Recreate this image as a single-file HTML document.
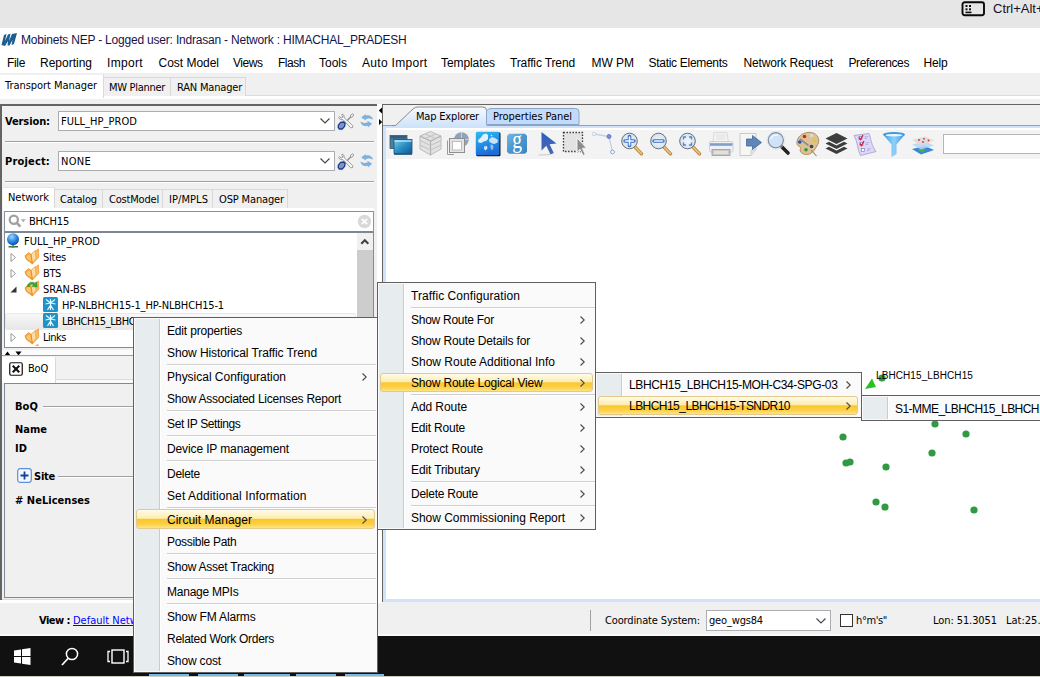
<!DOCTYPE html>
<html><head><meta charset="utf-8"><title>Mobinets NEP</title>
<style>
html,body{margin:0;padding:0;}
body{width:1040px;height:677px;overflow:hidden;position:relative;background:#f0f0f0;font-family:"Liberation Sans",sans-serif;color:#000;}
body div,body span.t,body svg{position:absolute;box-sizing:border-box;}
span.t{white-space:nowrap;}
.tah{font-family:"DejaVu Sans Condensed","DejaVu Sans","Liberation Sans",sans-serif;font-stretch:condensed;}
</style></head><body>
<div style="left:0px;top:0px;width:1040px;height:28px;background:#e6e6e6"></div>
<div style="left:0px;top:28px;width:1040px;height:45px;background:#fff"></div>
<div style="left:0px;top:73px;width:1040px;height:604px;background:#f0f0f0"></div>
<svg style="left:961px;top:0.8px" width="26" height="16" viewBox="0 0 26 16"><rect x="1.5" y="1.2" width="21.5" height="13" rx="2.2" fill="none" stroke="#0a0a0a" stroke-width="1.9"/><rect x="4.5" y="4" width="2" height="2" fill="#111"/><rect x="8" y="4" width="2" height="2" fill="#111"/><rect x="4.5" y="7.3" width="2" height="2" fill="#111"/><rect x="8" y="7.3" width="2" height="2" fill="#111"/><rect x="4.5" y="10.6" width="6" height="1.6" fill="#111"/></svg>
<span class="t" style="left:993px;top:0.5px;height:16px;line-height:16px;font-size:13px;color:#101030;">Ctrl+Alt+Del</span>
<svg style="left:0px;top:32px" width="19" height="16" viewBox="0 0 19 16"><path d="M1.5 13 L4 3 L6.5 2 L5 9 L8 2.5 L10.5 1.8 L9 9 L12 2 L17 1 L14 12 L11.5 13 L12.5 8 L9.5 13.5 L7.5 13.5 L8 9 L5 14 Z" fill="#1d5f8f"/></svg>
<span class="t" style="left:21px;top:32.0px;height:16px;line-height:16px;font-size:12px;letter-spacing:-0.202px;color:#14144a;">Mobinets NEP - Logged user: Indrasan - Network : HIMACHAL_PRADESH</span>
<span class="t" style="left:7px;top:55.0px;height:16px;line-height:16px;font-size:12px;letter-spacing:-0.336px;">File</span>
<span class="t" style="left:40px;top:55.0px;height:16px;line-height:16px;font-size:12px;letter-spacing:-0.003px;">Reporting</span>
<span class="t" style="left:107px;top:55.0px;height:16px;line-height:16px;font-size:12px;letter-spacing:0.331px;">Import</span>
<span class="t" style="left:158.5px;top:55.0px;height:16px;line-height:16px;font-size:12px;letter-spacing:-0.020px;">Cost Model</span>
<span class="t" style="left:233px;top:55.0px;height:16px;line-height:16px;font-size:12px;letter-spacing:-0.459px;">Views</span>
<span class="t" style="left:278px;top:55.0px;height:16px;line-height:16px;font-size:12px;letter-spacing:-0.469px;">Flash</span>
<span class="t" style="left:319px;top:55.0px;height:16px;line-height:16px;font-size:12px;letter-spacing:-0.003px;">Tools</span>
<span class="t" style="left:362px;top:55.0px;height:16px;line-height:16px;font-size:12px;letter-spacing:0.315px;">Auto Import</span>
<span class="t" style="left:441px;top:55.0px;height:16px;line-height:16px;font-size:12px;letter-spacing:-0.078px;">Templates</span>
<span class="t" style="left:510px;top:55.0px;height:16px;line-height:16px;font-size:12px;letter-spacing:-0.131px;">Traffic Trend</span>
<span class="t" style="left:591.5px;top:55.0px;height:16px;line-height:16px;font-size:12px;letter-spacing:-0.031px;">MW PM</span>
<span class="t" style="left:648.5px;top:55.0px;height:16px;line-height:16px;font-size:12px;letter-spacing:-0.292px;">Static Elements</span>
<span class="t" style="left:743.5px;top:55.0px;height:16px;line-height:16px;font-size:12px;letter-spacing:-0.170px;">Network Request</span>
<span class="t" style="left:848.5px;top:55.0px;height:16px;line-height:16px;font-size:12px;letter-spacing:-0.382px;">Preferences</span>
<span class="t" style="left:923.5px;top:55.0px;height:16px;line-height:16px;font-size:12px;letter-spacing:-0.172px;">Help</span>
<div style="left:0px;top:95px;width:1040px;height:1px;background:#dcdcdc;"></div>
<div style="left:0px;top:96px;width:1040px;height:3px;background:#fff;"></div>
<div style="left:0px;top:75px;width:104px;height:23px;background:#fff;border-right:1px solid #d9d9d9;"></div>
<div style="left:104px;top:77px;width:67px;height:19px;background:#f0f0f0;border:1px solid #d9d9d9;border-bottom:none;border-left:none;"></div>
<div style="left:171px;top:77px;width:75px;height:19px;background:#f0f0f0;border:1px solid #d9d9d9;border-bottom:none;border-left:none;"></div>
<span class="t tah" style="left:5px;top:78.0px;height:16px;line-height:16px;font-size:11px;letter-spacing:-0.047px;">Transport Manager</span>
<span class="t tah" style="left:109px;top:80.0px;height:16px;line-height:16px;font-size:11px;letter-spacing:-0.295px;">MW Planner</span>
<span class="t tah" style="left:177px;top:80.0px;height:16px;line-height:16px;font-size:11px;letter-spacing:-0.193px;">RAN Manager</span>
<div style="left:0px;top:104px;width:378px;height:2px;background:#646464;"></div>
<div style="left:0px;top:104px;width:2px;height:498px;background:#646464;"></div>
<div style="left:2px;top:599px;width:376px;height:1px;background:#dcdcdc;"></div>
<div style="left:0px;top:600px;width:382px;height:3px;background:#fff;"></div>
<div style="left:377px;top:104px;width:5px;height:498px;background:#fff;"></div>
<svg style="left:377px;top:106px" width="6" height="20" viewBox="0 0 6 20"><path d="M5 1.5 L5 7.5 L1.8 4.5 Z" fill="#000"/><path d="M2 13 L2 19 L5.2 16 Z" fill="#000"/></svg>
<span class="t tah" style="left:5px;top:114.0px;height:16px;line-height:16px;font-size:11px;font-weight:bold;letter-spacing:-0.094px;">Version:</span>
<div style="left:58px;top:111px;width:277px;height:20px;background:#fff;border:1px solid #abadb3;"></div>
<span class="t tah" style="left:61px;top:114.0px;height:16px;line-height:16px;font-size:11px;letter-spacing:0.039px;">FULL_HP_PROD</span>
<svg style="left:319px;top:117px" width="12" height="8" viewBox="0 0 12 8"><path d="M1.5 1.5 L6 6 L10.5 1.5" fill="none" stroke="#444" stroke-width="1.1"/></svg>
<svg style="left:337px;top:112px" width="18" height="18" viewBox="0 0 18 18"><path d="M15.2 3.2 L7.5 11.5" stroke="#8c8c8c" stroke-width="1.3"/><ellipse cx="15" cy="3.6" rx="1.9" ry="1.2" transform="rotate(-45 15 3.6)" fill="#fafafa" stroke="#8c8c8c" stroke-width="0.9"/><path d="M5.2 2.2 L6.8 3.2 L7.2 5.8 L15.8 13.8 L15.6 15.6 L13.8 15.8 L6.2 7.8 L3.4 7.6 L1.6 5.4 L2.4 4.6 L4 6 L5.4 5.6 L5.6 4 L4.4 3 Z" fill="#fcfcfc" stroke="#8c8c8c" stroke-width="0.9" stroke-linejoin="round"/><path d="M1.4 13.2 L3.6 10.4 L6.8 10 L8 11.6 L7.6 14.4 L5.2 17 L2.2 17 L1.2 15.4 Z" fill="#7f95bd" stroke="#173c92" stroke-width="1.3" stroke-linejoin="round"/></svg>
<svg style="left:359px;top:113px" width="16" height="16" viewBox="0 0 16 16"><path d="M2.2 4.6 L6.5 1 L6.5 2.6 C10 1.5 13.5 3 14 6.8 C12 5.3 9.5 5.2 6.8 6 L7 7.6 Z" fill="#7fb0dc"/><path d="M13.2 10.8 L8.9 14.4 L8.9 12.8 C5.4 13.9 1.9 12.4 1.4 8.6 C3.4 10.1 5.9 10.2 8.6 9.4 L8.4 7.8 Z" fill="#7fb0dc"/></svg>
<span class="t tah" style="left:5px;top:154.0px;height:16px;line-height:16px;font-size:11px;font-weight:bold;letter-spacing:0.176px;">Project:</span>
<div style="left:58px;top:151px;width:277px;height:20px;background:#fff;border:1px solid #abadb3;"></div>
<span class="t tah" style="left:61px;top:154.0px;height:16px;line-height:16px;font-size:11px;letter-spacing:0.289px;">NONE</span>
<svg style="left:319px;top:157px" width="12" height="8" viewBox="0 0 12 8"><path d="M1.5 1.5 L6 6 L10.5 1.5" fill="none" stroke="#444" stroke-width="1.1"/></svg>
<svg style="left:337px;top:152px" width="18" height="18" viewBox="0 0 18 18"><path d="M15.2 3.2 L7.5 11.5" stroke="#8c8c8c" stroke-width="1.3"/><ellipse cx="15" cy="3.6" rx="1.9" ry="1.2" transform="rotate(-45 15 3.6)" fill="#fafafa" stroke="#8c8c8c" stroke-width="0.9"/><path d="M5.2 2.2 L6.8 3.2 L7.2 5.8 L15.8 13.8 L15.6 15.6 L13.8 15.8 L6.2 7.8 L3.4 7.6 L1.6 5.4 L2.4 4.6 L4 6 L5.4 5.6 L5.6 4 L4.4 3 Z" fill="#fcfcfc" stroke="#8c8c8c" stroke-width="0.9" stroke-linejoin="round"/><path d="M1.4 13.2 L3.6 10.4 L6.8 10 L8 11.6 L7.6 14.4 L5.2 17 L2.2 17 L1.2 15.4 Z" fill="#7f95bd" stroke="#173c92" stroke-width="1.3" stroke-linejoin="round"/></svg>
<svg style="left:359px;top:153px" width="16" height="16" viewBox="0 0 16 16"><path d="M2.2 4.6 L6.5 1 L6.5 2.6 C10 1.5 13.5 3 14 6.8 C12 5.3 9.5 5.2 6.8 6 L7 7.6 Z" fill="#7fb0dc"/><path d="M13.2 10.8 L8.9 14.4 L8.9 12.8 C5.4 13.9 1.9 12.4 1.4 8.6 C3.4 10.1 5.9 10.2 8.6 9.4 L8.4 7.8 Z" fill="#7fb0dc"/></svg>
<div style="left:5px;top:141px;width:369px;height:1px;background:#a0a0a0;"></div>
<div style="left:5px;top:142px;width:369px;height:1px;background:#fff;"></div>
<div style="left:5px;top:181px;width:369px;height:1px;background:#a0a0a0;"></div>
<div style="left:5px;top:182px;width:369px;height:1px;background:#fff;"></div>
<div style="left:3px;top:187px;width:52px;height:22px;background:#fff;border-right:1px solid #d9d9d9;border-top:1px solid #e5e5e5;"></div>
<div style="left:55px;top:189px;width:48px;height:19px;background:#f0f0f0;border:1px solid #d9d9d9;border-bottom:none;border-left:none;"></div>
<span class="t tah" style="left:60px;top:192.0px;height:16px;line-height:16px;font-size:11px;letter-spacing:-0.145px;">Catalog</span>
<div style="left:103px;top:189px;width:60px;height:19px;background:#f0f0f0;border:1px solid #d9d9d9;border-bottom:none;border-left:none;"></div>
<span class="t tah" style="left:109px;top:192.0px;height:16px;line-height:16px;font-size:11px;letter-spacing:-0.191px;">CostModel</span>
<div style="left:163px;top:189px;width:50px;height:19px;background:#f0f0f0;border:1px solid #d9d9d9;border-bottom:none;border-left:none;"></div>
<span class="t tah" style="left:169px;top:192.0px;height:16px;line-height:16px;font-size:11px;letter-spacing:0.067px;">IP/MPLS</span>
<div style="left:213px;top:189px;width:75px;height:19px;background:#f0f0f0;border:1px solid #d9d9d9;border-bottom:none;border-left:none;"></div>
<span class="t tah" style="left:219px;top:192.0px;height:16px;line-height:16px;font-size:11px;letter-spacing:-0.143px;">OSP Manager</span>
<span class="t tah" style="left:8px;top:190.0px;height:16px;line-height:16px;font-size:11px;letter-spacing:-0.047px;">Network</span>
<div style="left:3px;top:208px;width:371px;height:3px;background:#fff;"></div>
<div style="left:4px;top:211px;width:370px;height:22px;background:#fff;border:1px solid #8a94a0;border-bottom:2px solid #7d8793;"></div>
<svg style="left:8px;top:214px" width="20" height="14" viewBox="0 0 20 14"><circle cx="5.8" cy="5.8" r="4.1" fill="none" stroke="#a0a0a0" stroke-width="2.2"/><path d="M8.8 8.8 L12.3 12.6" stroke="#a0a0a0" stroke-width="2.6"/><path d="M12.8 5.3 L17.8 5.3 L15.3 8.2 Z" fill="#ababab"/></svg>
<span class="t tah" style="left:29px;top:214.0px;height:16px;line-height:16px;font-size:11px;letter-spacing:-0.198px;">BHCH15</span>
<svg style="left:356.5px;top:213.5px" width="15" height="15" viewBox="0 0 15 15"><circle cx="7.5" cy="7.5" r="6.7" fill="#d9d9d9"/><path d="M4.8 4.8 L10.2 10.2 M10.2 4.8 L4.8 10.2" stroke="#fff" stroke-width="1.8"/></svg>
<div style="left:4px;top:233px;width:370px;height:115px;background:#fff;border:1px solid #828c99;border-top:none;"></div>
<div style="left:357px;top:233px;width:16px;height:114px;background:#f0f0f0;"></div>
<div style="left:357px;top:250px;width:16px;height:97px;background:#cdcdcd;"></div>
<svg style="left:359px;top:237px" width="12" height="8" viewBox="0 0 12 8"><path d="M2.3 6.8 L5.8 3.3 L9.3 6.8" fill="none" stroke="#404040" stroke-width="2.1"/></svg>
<div style="left:5px;top:313px;width:351px;height:17px;background:linear-gradient(#f8f8f8,#e7e7e7);border:1px solid #e2e9f1;border-radius:2px;"></div>
<svg style="left:6px;top:233px" width="15" height="16" viewBox="0 0 15 16"><defs><radialGradient id="gl" cx="0.4" cy="0.3" r="0.7"><stop offset="0" stop-color="#9fd4ff"/><stop offset="0.6" stop-color="#2a86e0"/><stop offset="1" stop-color="#0c4fa8"/></radialGradient></defs><circle cx="7" cy="6.3" r="6" fill="url(#gl)"/><path d="M2.5 13.8 L12 13.8" stroke="#333" stroke-width="1.2"/><circle cx="7" cy="13.6" r="1.5" fill="#2fa52f"/></svg>
<span class="t tah" style="left:24px;top:234.0px;height:16px;line-height:16px;font-size:11px;letter-spacing:0.039px;">FULL_HP_PROD</span>
<svg style="left:9px;top:252px" width="9" height="11" viewBox="0 0 9 11"><path d="M2 1.5 L6.5 5.5 L2 9.5 Z" fill="#fff" stroke="#989898" stroke-width="1"/></svg>
<svg style="left:24px;top:248px" width="16" height="17" viewBox="0 0 16 17"><path d="M8.2 6.2 L14.4 0.9 L14.8 9.2 L8.6 15.8 Z" fill="#fbbd62" stroke="#f09a30" stroke-width="0.8" stroke-linejoin="round"/><path d="M6.6 6.8 L11.4 2.4 L12 10.4 L8.2 15.6 Z" fill="#ffdcaa" stroke="#f2a23a" stroke-width="0.8" stroke-linejoin="round"/><path d="M1 7.8 L4.8 4.8 L7.2 6.6 L8.4 15.8 L2.6 11.6 Z" fill="#f8ab42" stroke="#ec8a1a" stroke-width="0.9" stroke-linejoin="round"/><path d="M2.4 8.4 L4.8 6.4 L6.2 7.6 L7 13.4 L3.4 10.8 Z" fill="#fcc778"/></svg>
<span class="t tah" style="left:43px;top:250.0px;height:16px;line-height:16px;font-size:11px;letter-spacing:-0.234px;">Sites</span>
<svg style="left:9px;top:268px" width="9" height="11" viewBox="0 0 9 11"><path d="M2 1.5 L6.5 5.5 L2 9.5 Z" fill="#fff" stroke="#989898" stroke-width="1"/></svg>
<svg style="left:24px;top:264px" width="16" height="17" viewBox="0 0 16 17"><path d="M8.2 6.2 L14.4 0.9 L14.8 9.2 L8.6 15.8 Z" fill="#fbbd62" stroke="#f09a30" stroke-width="0.8" stroke-linejoin="round"/><path d="M6.6 6.8 L11.4 2.4 L12 10.4 L8.2 15.6 Z" fill="#ffdcaa" stroke="#f2a23a" stroke-width="0.8" stroke-linejoin="round"/><path d="M1 7.8 L4.8 4.8 L7.2 6.6 L8.4 15.8 L2.6 11.6 Z" fill="#f8ab42" stroke="#ec8a1a" stroke-width="0.9" stroke-linejoin="round"/><path d="M2.4 8.4 L4.8 6.4 L6.2 7.6 L7 13.4 L3.4 10.8 Z" fill="#fcc778"/></svg>
<span class="t tah" style="left:43px;top:266.0px;height:16px;line-height:16px;font-size:11px;letter-spacing:-0.375px;">BTS</span>
<svg style="left:9px;top:285px" width="9" height="9" viewBox="0 0 9 9"><path d="M7.5 1.5 L7.5 7.5 L1.5 7.5 Z" fill="#333"/></svg>
<svg style="left:24px;top:280px" width="16" height="17" viewBox="0 0 16 17"><path d="M8.2 6.2 L14.4 0.9 L14.8 9.2 L8.6 15.8 Z" fill="#fbbd62" stroke="#f09a30" stroke-width="0.8" stroke-linejoin="round"/><path d="M6.6 6.8 L11.4 2.4 L12 10.4 L8.2 15.6 Z" fill="#ffdcaa" stroke="#f2a23a" stroke-width="0.8" stroke-linejoin="round"/><path d="M1 7.8 L4.8 4.8 L7.2 6.6 L8.4 15.8 L2.6 11.6 Z" fill="#f8ab42" stroke="#ec8a1a" stroke-width="0.9" stroke-linejoin="round"/><path d="M2.4 8.4 L4.8 6.4 L6.2 7.6 L7 13.4 L3.4 10.8 Z" fill="#fcc778"/><path d="M3.2 6.4 C3.8 2.4 8.4 0.8 11 3.4 L12.6 1.8 L13.2 7 L8 6.6 L9.6 4.9 C8.2 3.8 6 4.2 5.4 6.8 Z" fill="#35aa2c" stroke="#23861e" stroke-width="0.5"/></svg>
<span class="t tah" style="left:43px;top:282.0px;height:16px;line-height:16px;font-size:11px;letter-spacing:0.007px;">SRAN-BS</span>
<svg style="left:9px;top:332px" width="9" height="11" viewBox="0 0 9 11"><path d="M2 1.5 L6.5 5.5 L2 9.5 Z" fill="#fff" stroke="#989898" stroke-width="1"/></svg>
<svg style="left:24px;top:328px" width="16" height="17" viewBox="0 0 16 17"><path d="M8.2 6.2 L14.4 0.9 L14.8 9.2 L8.6 15.8 Z" fill="#fbbd62" stroke="#f09a30" stroke-width="0.8" stroke-linejoin="round"/><path d="M6.6 6.8 L11.4 2.4 L12 10.4 L8.2 15.6 Z" fill="#ffdcaa" stroke="#f2a23a" stroke-width="0.8" stroke-linejoin="round"/><path d="M1 7.8 L4.8 4.8 L7.2 6.6 L8.4 15.8 L2.6 11.6 Z" fill="#f8ab42" stroke="#ec8a1a" stroke-width="0.9" stroke-linejoin="round"/><path d="M2.4 8.4 L4.8 6.4 L6.2 7.6 L7 13.4 L3.4 10.8 Z" fill="#fcc778"/></svg>
<span class="t tah" style="left:43px;top:330.0px;height:16px;line-height:16px;font-size:11px;letter-spacing:-0.484px;">Links</span>
<svg style="left:43px;top:297px" width="15" height="15" viewBox="0 0 15 15"><rect width="15" height="15" rx="1.5" fill="#1e93c8"/><path d="M7.5 2 L7.5 13 M7.5 6 L3 2.5 M7.5 6 L12 2.5 M7.5 6 L2.5 7 M7.5 6 L12.5 7 M7.5 8 L4.5 13 M7.5 8 L10.5 13" stroke="#e8f6ff" stroke-width="1.2" fill="none"/></svg>
<span class="t tah" style="left:62px;top:298.0px;height:16px;line-height:16px;font-size:11px;letter-spacing:-0.161px;">HP-NLBHCH15-1_HP-NLBHCH15-1</span>
<svg style="left:43px;top:313px" width="15" height="15" viewBox="0 0 15 15"><rect width="15" height="15" rx="1.5" fill="#1e93c8"/><path d="M7.5 2 L7.5 13 M7.5 6 L3 2.5 M7.5 6 L12 2.5 M7.5 6 L2.5 7 M7.5 6 L12.5 7 M7.5 8 L4.5 13 M7.5 8 L10.5 13" stroke="#e8f6ff" stroke-width="1.2" fill="none"/></svg>
<span class="t tah" style="left:62px;top:314.0px;height:16px;line-height:16px;font-size:11px;letter-spacing:-0.423px;">LBHCH15_LBHCH15</span>
<svg style="left:26px;top:343px" width="14" height="3" viewBox="0 0 14 3"><path d="M9 3 L12 0.5 L13 3 Z" fill="#f7b04a"/></svg>
<div style="left:2px;top:350px;width:375px;height:5px;background:#fbfbfb;"></div>
<svg style="left:4px;top:350px" width="20" height="6" viewBox="0 0 20 6"><path d="M0.5 5.5 L3.5 1.5 L6.5 5.5 Z" fill="#000"/><path d="M11.5 1.5 L17.5 1.5 L14.5 5.5 Z" fill="#000"/></svg>
<div style="left:2px;top:355px;width:376px;height:1px;background:#a0a0a0;"></div>
<div style="left:2px;top:356px;width:375px;height:24px;background:#f1f1f1;"></div>
<div style="left:2px;top:379px;width:375px;height:1px;background:#dcdcdc;"></div>
<div style="left:2px;top:380px;width:375px;height:3px;background:#fbfbfb;"></div>
<div style="left:2px;top:357px;width:54px;height:26px;background:#fff;border-right:1px solid #d9d9d9;"></div>
<svg style="left:9px;top:362px" width="14" height="14" viewBox="0 0 15 15"><rect x="0.8" y="0.8" width="13.4" height="13.4" rx="1.5" fill="#fff" stroke="#111" stroke-width="1.3"/><path d="M4 4 L11 11 M11 4 L4 11" stroke="#111" stroke-width="2.2"/></svg>
<span class="t tah" style="left:28px;top:361.0px;height:16px;line-height:16px;font-size:11px;letter-spacing:-0.214px;">BoQ</span>
<div style="left:4px;top:383px;width:372px;height:215px;background:#f0f0f0;border:1px solid #7f8a96;"></div>
<span class="t tah" style="left:15px;top:399.0px;height:16px;line-height:16px;font-size:11px;font-weight:bold;letter-spacing:0.078px;">BoQ</span>
<div style="left:43px;top:406px;width:331px;height:1px;background:#a0a0a0;"></div>
<div style="left:43px;top:407px;width:331px;height:1px;background:#fff;"></div>
<span class="t tah" style="left:15px;top:422.0px;height:16px;line-height:16px;font-size:11px;font-weight:bold;">Name</span>
<span class="t tah" style="left:15px;top:441.0px;height:16px;line-height:16px;font-size:11px;font-weight:bold;letter-spacing:0.047px;">ID</span>
<svg style="left:17px;top:468px" width="15" height="15" viewBox="0 0 15 15"><rect x="0.7" y="0.7" width="13.6" height="13.6" rx="2.5" fill="#f4f8ff" stroke="#5d8fd6" stroke-width="1.2"/><path d="M7.5 3.5 L7.5 11.5 M3.5 7.5 L11.5 7.5" stroke="#1b3f9a" stroke-width="1.8"/></svg>
<span class="t tah" style="left:34px;top:469.0px;height:16px;line-height:16px;font-size:11px;font-weight:bold;letter-spacing:-0.242px;">Site</span>
<div style="left:58px;top:476px;width:316px;height:1px;background:#a0a0a0;"></div>
<div style="left:58px;top:477px;width:316px;height:1px;background:#fff;"></div>
<span class="t tah" style="left:15px;top:493.0px;height:16px;line-height:16px;font-size:11px;font-weight:bold;letter-spacing:0.036px;"># NeLicenses</span>
<span class="t tah" style="left:39px;top:613.0px;height:16px;line-height:16px;font-size:11px;font-weight:bold;letter-spacing:-0.521px;">View :</span>
<span class="t tah" style="left:73px;top:613.0px;height:16px;line-height:16px;font-size:11px;color:#0000ff;text-decoration:underline;">Default Network View</span>
<div style="left:382px;top:104px;width:658px;height:1px;background:#646464;"></div>
<div style="left:382px;top:104px;width:1px;height:498px;background:#646464;"></div>
<div style="left:383px;top:126px;width:660px;height:476px;background:#fff;border:3px solid #cfe3fa;border-top-width:2px;"></div>
<div style="left:383px;top:125px;width:657px;height:1px;background:#a0a0a0;"></div>
<svg style="left:392px;top:105px" width="190" height="24" viewBox="0 0 190 24"><defs><linearGradient id="tg" x1="0" y1="0" x2="0" y2="1"><stop offset="0" stop-color="#f6f9fe"/><stop offset="1" stop-color="#cfe3fa"/></linearGradient></defs><path d="M0 21.5 L3.5 20.5 L21 4 Q23 2 26 2 L91 2 Q94.5 2 94.5 5.5 L94.5 21.5 Z" fill="url(#tg)"/><path d="M0 20.5 L3.5 20.5 L21 4 Q23 2 26 2 L91 2 Q94.5 2 94.5 5.5 L94.5 19" fill="none" stroke="#8a8a8a" stroke-width="1"/><path d="M94.5 6 Q96 3.5 99 3.5 L183.5 3.5 Q187 3.5 187 7 L187 19.5 L94.5 19.5 Z" fill="#c3dbfa" stroke="#8aa5c8" stroke-width="1"/></svg>
<span class="t tah" style="left:416px;top:109.0px;height:16px;line-height:16px;font-size:11px;letter-spacing:-0.185px;">Map Explorer</span>
<span class="t tah" style="left:493px;top:109.0px;height:16px;line-height:16px;font-size:11px;letter-spacing:-0.048px;">Properties Panel</span>
<div style="left:386px;top:130px;width:654px;height:29px;background:#f3f3f3;"></div>
<svg style="left:0;top:0" width="0" height="0"><defs><linearGradient id="wb" x1="0" y1="0" x2="1" y2="1"><stop offset="0" stop-color="#7fd0ee"/><stop offset="0.5" stop-color="#2a8ec4"/><stop offset="1" stop-color="#125a94"/></linearGradient><linearGradient id="wm" x1="0" y1="0" x2="0" y2="1"><stop offset="0" stop-color="#57b4f0"/><stop offset="1" stop-color="#1a6fd0"/></linearGradient><linearGradient id="ar" x1="0" y1="0" x2="0" y2="1"><stop offset="0" stop-color="#2b5fc0"/><stop offset="1" stop-color="#4a68b0"/></linearGradient><radialGradient id="lens" cx="0.5" cy="0.5" r="0.6"><stop offset="0" stop-color="#f4f8fd"/><stop offset="1" stop-color="#c9dcf0"/></radialGradient><linearGradient id="fn" x1="0" y1="0" x2="1" y2="0"><stop offset="0" stop-color="#3aa0e6"/><stop offset="0.5" stop-color="#8fd0fa"/><stop offset="1" stop-color="#3a98e0"/></linearGradient></defs></svg>
<svg style="left:389px;top:134px" width="24" height="22" viewBox="0 0 24 22"><rect x="1" y="1.5" width="17" height="13" fill="#4d7f9d" stroke="#2d5a78" stroke-width="0.8"/><rect x="1.5" y="2" width="16" height="2.5" fill="#2f5f80"/><rect x="5" y="5.5" width="18" height="14" fill="url(#wb)" stroke="#1d4f78" stroke-width="0.8"/><rect x="5.5" y="6" width="17" height="2" fill="#cfeefa" opacity="0.6"/><rect x="5" y="19.5" width="18" height="1.3" fill="#1b4a70"/></svg>
<svg style="left:418px;top:130px" width="25" height="27" viewBox="0 0 25 27"><path d="M2 6 L12.5 1.5 L23 6 L23 19 L12.5 25 L2 19 Z" fill="#e2e2e2" stroke="#bcbcbc" stroke-width="1"/><path d="M2 6 L12.5 11 L23 6 M12.5 11 L12.5 25" fill="none" stroke="#b0b0b0" stroke-width="1.2"/><path d="M2 10.5 L12.5 15.5 L23 10.5 M2 15 L12.5 20 L23 15 M7 3.8 L17.5 8.6 M18 3.8 L7.5 8.6" fill="none" stroke="#c4c4c4" stroke-width="1.1"/></svg>
<svg style="left:446px;top:131px" width="24" height="25" viewBox="0 0 24 25"><circle cx="15.5" cy="8.5" r="7.3" fill="#8fa4bc"/><path d="M15.5 1.2 L15.5 15.8 M8.2 8.5 L22.8 8.5" stroke="#c8d4e2" stroke-width="0.9"/><path d="M1.5 9.5 L1.5 23.5 L8 23.5" fill="none" stroke="#9a9a9a" stroke-width="1"/><rect x="3.5" y="7.5" width="15" height="14" fill="#e4e4e4" stroke="#8e8e8e" stroke-width="1"/><rect x="6.5" y="10.5" width="9" height="8.5" fill="#fff" stroke="#b0b0b0" stroke-width="0.8"/></svg>
<svg style="left:475px;top:131px" width="26" height="26" viewBox="0 0 26 26"><defs><linearGradient id="wm2" x1="0" y1="0" x2="0.3" y2="1"><stop offset="0" stop-color="#2cbcf2"/><stop offset="0.5" stop-color="#2494ea"/><stop offset="1" stop-color="#1c6cd6"/></linearGradient><filter id="bl" x="-20%" y="-20%" width="140%" height="140%"><feGaussianBlur stdDeviation="0.7"/></filter></defs><rect x="1.2" y="1.2" width="24.3" height="24" rx="1.5" fill="#10161f"/><rect x="0.8" y="0.8" width="23.6" height="23.4" rx="1.6" fill="url(#wm2)"/><g filter="url(#bl)" fill="#ffffff"><path d="M3 9 L6 6.5 L8 3.5 L11 2.5 L13 4 L13 8 L11 10 L8.5 10.5 L6.5 12 L3.5 11.5 Z" opacity="0.85"/><path d="M14 8.5 L17 6 L20 7 L23 9 L22.5 11.5 L19.5 13 L17 12.5 L14.5 11 Z" opacity="0.75"/><path d="M9 15.5 L12 15 L12.5 17.5 L10.5 19.5 L9 18 Z" opacity="0.8"/><path d="M15.5 13.5 L18 14 L18.5 17 L17 19.5 L15.5 17 Z" opacity="0.5"/><circle cx="16.5" cy="4.6" r="0.8" opacity="0.8"/></g></svg>
<svg style="left:506px;top:133px" width="22" height="21" viewBox="0 0 22 21"><defs><linearGradient id="gg" x1="0" y1="0" x2="1" y2="1"><stop offset="0" stop-color="#78b6e2"/><stop offset="0.5" stop-color="#4a96d0"/><stop offset="1" stop-color="#3a86c2"/></linearGradient></defs><path d="M3 0.8 L19 0.8 L21 2.8 L21 18.8 L19 20.8 L3 20.8 L1 18.8 L1 2.8 Z" fill="url(#gg)"/><text transform="translate(11.2 14.8) scale(0.78 1)" text-anchor="middle" font-family="Liberation Serif, serif" font-size="25" fill="#fff">g</text></svg>
<svg style="left:538px;top:131px" width="20" height="25" viewBox="0 0 20 25"><path d="M3.5 1 L3.5 19.5 L8.3 14.8 L12.5 23.5 L15.8 22 L11.6 13.3 L18.5 12.6 Z" fill="url(#ar)"/><path d="M0.5 24 L12 23.6" stroke="#c9c9c9" stroke-width="1"/></svg>
<svg style="left:562px;top:131px" width="27" height="26" viewBox="0 0 27 26"><rect x="1.5" y="1.5" width="19" height="19" fill="#e3e3e3" stroke="#333" stroke-width="1.3" stroke-dasharray="1.4 1.6"/><path d="M15 7 L15 21 L18 18.3 L21 24.5 L23.3 23.4 L20.3 17.4 L24.5 17 Z" fill="#8c8c8c" stroke="#f8f8f8" stroke-width="0.9"/></svg>
<svg style="left:590px;top:131px" width="27" height="26" viewBox="0 0 27 26"><path d="M4 3 L19 5.5 L22.5 21" fill="none" stroke="#c3cfe6" stroke-width="1.3"/><circle cx="4" cy="3" r="1.8" fill="#f3f3f3" stroke="#cdd3dc" stroke-width="1"/><circle cx="19" cy="5.5" r="2" fill="#7c8ed8" stroke="#6173c6" stroke-width="0.9"/><circle cx="22.5" cy="21" r="1.9" fill="#f4f6fb" stroke="#8ea6d8" stroke-width="1"/></svg>
<svg style="left:620px;top:132px" width="24" height="24" viewBox="0 0 24 24"><path d="M15 15 L21.5 21.8" stroke="#b98a3e" stroke-width="3.4" stroke-linecap="round"/><path d="M15.3 15.3 L21.3 21.5" stroke="#ecc98a" stroke-width="1.5" stroke-linecap="round"/><circle cx="9.5" cy="9" r="7.8" fill="url(#lens)" stroke="#6f6f6f" stroke-width="1"/><path d="M9.5 4.6 L9.5 13.4 M5.1 9 L13.9 9" stroke="#3a6fc2" stroke-width="3.6" stroke-linecap="round"/><path d="M9.5 5 L9.5 13 M5.5 9 L13.5 9" stroke="#f2f7ff" stroke-width="1.6" stroke-linecap="round"/></svg>
<svg style="left:649px;top:132px" width="24" height="24" viewBox="0 0 24 24"><path d="M15 15 L21.5 21.8" stroke="#b98a3e" stroke-width="3.4" stroke-linecap="round"/><path d="M15.3 15.3 L21.3 21.5" stroke="#ecc98a" stroke-width="1.5" stroke-linecap="round"/><circle cx="9.5" cy="9" r="7.8" fill="url(#lens)" stroke="#6f6f6f" stroke-width="1"/><path d="M5.1 9 L13.9 9" stroke="#3a6fc2" stroke-width="3.6" stroke-linecap="round"/><path d="M5.5 9 L13.5 9" stroke="#f2f7ff" stroke-width="1.6" stroke-linecap="round"/></svg>
<svg style="left:678px;top:132px" width="24" height="24" viewBox="0 0 24 24"><path d="M15 15 L21.5 21.8" stroke="#b98a3e" stroke-width="3.4" stroke-linecap="round"/><path d="M15.3 15.3 L21.3 21.5" stroke="#ecc98a" stroke-width="1.5" stroke-linecap="round"/><circle cx="9.5" cy="9" r="7.8" fill="url(#lens)" stroke="#6f6f6f" stroke-width="1"/><path d="M5.5 7.5 L5.5 5 L8 5 M11 5 L13.5 5 L13.5 7.5 M13.5 10.5 L13.5 13 L11 13 M8 13 L5.5 13 L5.5 10.5" fill="none" stroke="#4a86d8" stroke-width="1.3"/></svg>
<svg style="left:708px;top:131px" width="27" height="26" viewBox="0 0 27 26"><path d="M6 1.5 L19 1.5 L20.5 12 L5 12 Z" fill="#f4f4f4" stroke="#d2d2d2" stroke-width="0.8"/><path d="M8 4 L17.5 4 M8 6 L17.5 6 M8 8 L17.5 8" stroke="#dcdcdc" stroke-width="0.8"/><rect x="1.5" y="10.5" width="23.5" height="10.5" rx="1.5" fill="#eef0f3" stroke="#c3c8d0" stroke-width="0.8"/><rect x="2" y="12.2" width="22.5" height="2.6" fill="#7f9fcf"/><rect x="4" y="18.5" width="18" height="6" fill="#c9c9c9" stroke="#9a9a9a" stroke-width="0.8"/><rect x="6" y="20" width="14" height="3" fill="#e3e0d6"/></svg>
<svg style="left:738px;top:132px" width="25" height="25" viewBox="0 0 25 25"><path d="M2 1.5 L18 1.5 L18 18 L13 23.5 L2 23.5 Z" fill="#f6f6f6" stroke="#c9c9c9" stroke-width="1"/><path d="M18 18 L13 18 L13 23.5" fill="#e4e4e4" stroke="#c9c9c9" stroke-width="0.8"/><path d="M8.5 7 L14.5 7 L14.5 3.5 L23.5 10.5 L14.5 17.5 L14.5 14 L8.5 14 Z" fill="#5e86b8" stroke="#3f6798" stroke-width="0.8"/></svg>
<svg style="left:766px;top:131px" width="26" height="26" viewBox="0 0 26 26"><path d="M15.5 15.5 L22 22" stroke="#222" stroke-width="3.6" stroke-linecap="round"/><circle cx="9.8" cy="9.3" r="7.6" fill="#cfe2f8" stroke="#7d8ea4" stroke-width="1.2"/><circle cx="9.8" cy="9.3" r="9" fill="none" stroke="#e4e4e4" stroke-width="0.8"/><path d="M5 8 C6 5 9 3.5 12 4.5" fill="none" stroke="#fff" stroke-width="1.5" opacity="0.8"/></svg>
<svg style="left:795px;top:131px" width="26" height="27" viewBox="0 0 26 27"><path d="M2 13 C1 6 8 0.5 16 1.5 C23 2.5 25.5 9 22.5 14 C20 18 19 21 14.5 23 C9 25 3.5 21 5.5 17.5 C6.5 15.5 3 16 2 13 Z" fill="#dcc193" stroke="#a8895a" stroke-width="0.9"/><circle cx="9.5" cy="5.5" r="1.8" fill="#c42a2a"/><circle cx="16.5" cy="4.5" r="1.8" fill="#d9d9d9"/><circle cx="19.5" cy="9.5" r="1.8" fill="#e5c52a"/><circle cx="4.8" cy="11" r="1.8" fill="#2748b5"/><circle cx="16.5" cy="15.5" r="1.8" fill="#3a3f58"/><circle cx="11" cy="18.8" r="1.8" fill="#2f9a2f"/><path d="M5 8 L13.5 14.5" stroke="#8e8e96" stroke-width="1.6"/><path d="M16 19 L21.5 25" stroke="#9a8468" stroke-width="1.1"/></svg>
<svg style="left:824px;top:132px" width="25" height="25" viewBox="0 0 25 25"><path d="M12.5 1 L23.5 6.5 L12.5 12 L1.5 6.5 Z" fill="#3d3d3d"/><path d="M1.5 11.5 L5 9.8 L12.5 13.6 L20 9.8 L23.5 11.5 L12.5 17 Z" fill="#3d3d3d"/><path d="M1.5 16.5 L5 14.8 L12.5 18.6 L20 14.8 L23.5 16.5 L12.5 22 Z" fill="#3d3d3d"/></svg>
<svg style="left:852px;top:132px" width="27" height="25" viewBox="0 0 27 25"><path d="M2 3.5 L17 1.5 C19 6 19 13 24 19.5 L8.5 23.5 C5 17 6 10 2 3.5 Z" fill="#dcd8f6" stroke="#a9a2dc" stroke-width="0.9"/><rect x="7" y="4.5" width="3" height="3" fill="#fff" stroke="#6f6fae" stroke-width="0.6"/><rect x="8" y="10.5" width="3" height="3" fill="#fff" stroke="#6f6fae" stroke-width="0.6"/><rect x="9.5" y="16.5" width="3" height="3" fill="#fff" stroke="#6f6fae" stroke-width="0.6"/><path d="M7 5.5 L8.5 7.5 L11 3 M8 11.5 L9.5 13.5 L12 9" fill="none" stroke="#e01c3c" stroke-width="1.3"/><path d="M12.5 5 L16 4.6 M12.5 6.6 L15 6.3 M13.5 11 L17 10.6 M13.5 12.6 L16 12.3 M15 17 L18.5 16.6 M15 18.6 L17.5 18.3" stroke="#a9a2dc" stroke-width="0.8"/></svg>
<svg style="left:882px;top:131px" width="24" height="27" viewBox="0 0 24 27"><path d="M1 3.5 L23 3.5 L14.5 13.5 L14.5 23 L9.5 26 L9.5 13.5 Z" fill="url(#fn)"/><ellipse cx="12" cy="3.5" rx="11" ry="2.6" fill="#3a9ae2"/><ellipse cx="12" cy="4.3" rx="8.5" ry="1.4" fill="#eaf6ff"/></svg>
<svg style="left:910px;top:135px" width="26" height="21" viewBox="0 0 26 21"><path d="M2 14 L15 11 L24 15 L11 19.5 Z" fill="#3a86d8"/><path d="M7 14.5 L13 13 L16 15 L12 17.5 Z" fill="#46b04a"/><path d="M2 9.5 L15 6.5 L24 10.5 L11 14.5 Z" fill="#b5d6f6" opacity="0.85"/><path d="M2 5 L15 1.5 L24 5.5 L11 10 Z" fill="#dcdcdc" opacity="0.95"/><circle cx="9" cy="5" r="0.9" fill="#e03030"/><circle cx="14" cy="3.8" r="0.9" fill="#e03030"/><circle cx="13" cy="7" r="0.9" fill="#e03030"/><circle cx="18.5" cy="5.5" r="0.9" fill="#e03030"/></svg>
<div style="left:943px;top:134px;width:100px;height:20px;background:#fff;border:1px solid #b5b5b5;"></div>
<svg style="left:878px;top:374px" width="8" height="8" viewBox="0 0 8 8"><circle cx="4" cy="4" r="3.6" fill="#2f9a41"/></svg>
<svg style="left:931px;top:420px" width="8" height="8" viewBox="0 0 8 8"><circle cx="4" cy="4" r="3.6" fill="#2f9a41"/></svg>
<svg style="left:962px;top:430px" width="8" height="8" viewBox="0 0 8 8"><circle cx="4" cy="4" r="3.6" fill="#2f9a41"/></svg>
<svg style="left:839px;top:433px" width="8" height="8" viewBox="0 0 8 8"><circle cx="4" cy="4" r="3.6" fill="#2f9a41"/></svg>
<svg style="left:928px;top:449px" width="8" height="8" viewBox="0 0 8 8"><circle cx="4" cy="4" r="3.6" fill="#2f9a41"/></svg>
<svg style="left:842px;top:459px" width="8" height="8" viewBox="0 0 8 8"><circle cx="4" cy="4" r="3.6" fill="#2f9a41"/></svg>
<svg style="left:846px;top:458px" width="8" height="8" viewBox="0 0 8 8"><circle cx="4" cy="4" r="3.6" fill="#2f9a41"/></svg>
<svg style="left:882px;top:463px" width="8" height="8" viewBox="0 0 8 8"><circle cx="4" cy="4" r="3.6" fill="#2f9a41"/></svg>
<svg style="left:872px;top:498px" width="8" height="8" viewBox="0 0 8 8"><circle cx="4" cy="4" r="3.6" fill="#2f9a41"/></svg>
<svg style="left:881px;top:503px" width="8" height="8" viewBox="0 0 8 8"><circle cx="4" cy="4" r="3.6" fill="#2f9a41"/></svg>
<svg style="left:970px;top:506px" width="8" height="8" viewBox="0 0 8 8"><circle cx="4" cy="4" r="3.6" fill="#2f9a41"/></svg>
<svg style="left:863px;top:377px" width="14" height="13" viewBox="0 0 14 13"><path d="M2 12 L9 1.5 L13 10 Z" fill="#22c322"/></svg>
<span class="t" style="left:876px;top:368.0px;height:16px;line-height:16px;font-size:10px;letter-spacing:0.093px;">LBHCH15_LBHCH15</span>
<div style="left:590px;top:610px;width:1px;height:21px;background:#a0a0a0;"></div>
<span class="t tah" style="left:605px;top:613.0px;height:16px;line-height:16px;font-size:11px;letter-spacing:-0.146px;">Coordinate System:</span>
<div style="left:706px;top:610px;width:125px;height:21px;background:#fff;border:1px solid #abadb3;"></div>
<span class="t tah" style="left:709px;top:613.0px;height:16px;line-height:16px;font-size:11px;letter-spacing:-0.167px;">geo_wgs84</span>
<svg style="left:815px;top:617px" width="12" height="8" viewBox="0 0 12 8"><path d="M1.5 1.5 L6 6 L10.5 1.5" fill="none" stroke="#444" stroke-width="1.1"/></svg>
<div style="left:840px;top:614px;width:13px;height:13px;background:#fff;border:1px solid #333;"></div>
<span class="t tah" style="left:856px;top:613.0px;height:16px;line-height:16px;font-size:11px;letter-spacing:-0.383px;">h°m's"</span>
<span class="t tah" style="left:933px;top:613.0px;height:16px;line-height:16px;font-size:11px;letter-spacing:-0.087px;">Lon: 51.3051</span>
<span class="t tah" style="left:1006px;top:613.0px;height:16px;line-height:16px;font-size:11px;">Lat:25.2867</span>
<div style="left:0px;top:634px;width:1040px;height:2px;background:#fafafa;"></div>
<div style="left:0px;top:636px;width:1040px;height:40px;background:#111111;"></div>
<div style="left:0px;top:676px;width:1040px;height:1px;background:#cdd0b8;"></div>
<div style="left:149px;top:674px;width:40px;height:2px;background:#76b9ed;"></div>
<div style="left:198px;top:674px;width:40px;height:2px;background:#76b9ed;"></div>
<div style="left:243.5px;top:674px;width:46.5px;height:2px;background:#76b9ed;"></div>
<div style="left:296px;top:674px;width:40px;height:2px;background:#76b9ed;"></div>
<div style="left:345px;top:674px;width:39px;height:2px;background:#76b9ed;"></div>
<svg style="left:14px;top:648px" width="17" height="17" viewBox="0 0 17 17"><path d="M0 2.4 L7 1.4 L7 8 L0 8 Z M8 1.2 L16.5 0 L16.5 8 L8 8 Z M0 9 L7 9 L7 15.6 L0 14.6 Z M8 9 L16.5 9 L16.5 17 L8 15.8 Z" fill="#fff"/></svg>
<svg style="left:61px;top:647px" width="18" height="19" viewBox="0 0 18 19"><circle cx="11" cy="7" r="5.6" fill="none" stroke="#fff" stroke-width="1.5"/><path d="M7 11.5 L1 18" stroke="#fff" stroke-width="1.8"/></svg>
<svg style="left:107px;top:649px" width="22" height="15" viewBox="0 0 22 15"><rect x="5" y="1" width="12" height="13" fill="none" stroke="#fff" stroke-width="1.4"/><path d="M3 2.5 L1 2.5 L1 12.5 L3 12.5 M19 2.5 L21 2.5 L21 12.5 L19 12.5" fill="none" stroke="#fff" stroke-width="1.3"/></svg>
<div style="left:133px;top:317px;width:245px;height:356px;background:#fafafa;border:1px solid #5f5f5f;"></div>
<div style="left:135px;top:319px;width:24px;height:352px;background:#e7ecee;"></div>
<div style="left:159px;top:319px;width:1px;height:352px;background:#c9cccf;"></div>
<div style="left:160px;top:319px;width:1px;height:352px;background:#ffffff;"></div>
<div style="left:167px;top:364px;width:209px;height:1px;background:#d0d0d0;"></div>
<div style="left:167px;top:365px;width:209px;height:1px;background:#ffffff;"></div>
<div style="left:167px;top:410px;width:209px;height:1px;background:#d0d0d0;"></div>
<div style="left:167px;top:411px;width:209px;height:1px;background:#ffffff;"></div>
<div style="left:167px;top:435px;width:209px;height:1px;background:#d0d0d0;"></div>
<div style="left:167px;top:436px;width:209px;height:1px;background:#ffffff;"></div>
<div style="left:167px;top:460px;width:209px;height:1px;background:#d0d0d0;"></div>
<div style="left:167px;top:461px;width:209px;height:1px;background:#ffffff;"></div>
<div style="left:167px;top:507px;width:209px;height:1px;background:#d0d0d0;"></div>
<div style="left:167px;top:508px;width:209px;height:1px;background:#ffffff;"></div>
<div style="left:167px;top:553px;width:209px;height:1px;background:#d0d0d0;"></div>
<div style="left:167px;top:554px;width:209px;height:1px;background:#ffffff;"></div>
<div style="left:167px;top:578px;width:209px;height:1px;background:#d0d0d0;"></div>
<div style="left:167px;top:579px;width:209px;height:1px;background:#ffffff;"></div>
<div style="left:167px;top:603px;width:209px;height:1px;background:#d0d0d0;"></div>
<div style="left:167px;top:604px;width:209px;height:1px;background:#ffffff;"></div>
<div style="left:136px;top:509px;width:239px;height:20px;border:1px solid #e3c98f;border-radius:3px;background:linear-gradient(#fffbe8 0%,#fdedb0 46%,#fbc628 52%,#fcd24c 80%,#fde486 100%);"></div>
<span class="t" style="left:167px;top:323.0px;height:16px;line-height:16px;font-size:12px;letter-spacing:-0.158px;">Edit properties</span>
<span class="t" style="left:167px;top:345.0px;height:16px;line-height:16px;font-size:12px;letter-spacing:-0.087px;">Show Historical Traffic Trend</span>
<span class="t" style="left:167px;top:369.0px;height:16px;line-height:16px;font-size:12px;letter-spacing:-0.018px;">Physical Configuration</span>
<svg style="left:361px;top:372px" width="8" height="10" viewBox="0 0 8 10"><path d="M1.5 1.5 L5.2 5 L1.5 8.5" fill="none" stroke="#4a4a4a" stroke-width="1.1"/></svg>
<span class="t" style="left:167px;top:391.0px;height:16px;line-height:16px;font-size:12px;letter-spacing:-0.240px;">Show Associated Licenses Report</span>
<span class="t" style="left:167px;top:416.0px;height:16px;line-height:16px;font-size:12px;letter-spacing:-0.378px;">Set IP Settings</span>
<span class="t" style="left:167px;top:441.0px;height:16px;line-height:16px;font-size:12px;letter-spacing:-0.126px;">Device IP management</span>
<span class="t" style="left:167px;top:466.0px;height:16px;line-height:16px;font-size:12px;letter-spacing:-0.281px;">Delete</span>
<span class="t" style="left:167px;top:487.5px;height:16px;line-height:16px;font-size:12px;letter-spacing:0.105px;">Set Additional Information</span>
<span class="t" style="left:167px;top:511.5px;height:16px;line-height:16px;font-size:12px;letter-spacing:0.020px;">Circuit Manager</span>
<svg style="left:361px;top:514.5px" width="8" height="10" viewBox="0 0 8 10"><path d="M1.5 1.5 L5.2 5 L1.5 8.5" fill="none" stroke="#4a4a4a" stroke-width="1.1"/></svg>
<span class="t" style="left:167px;top:534.0px;height:16px;line-height:16px;font-size:12px;letter-spacing:-0.299px;">Possible Path</span>
<span class="t" style="left:167px;top:558.5px;height:16px;line-height:16px;font-size:12px;letter-spacing:-0.231px;">Show Asset Tracking</span>
<span class="t" style="left:167px;top:583.5px;height:16px;line-height:16px;font-size:12px;letter-spacing:-0.232px;">Manage MPIs</span>
<span class="t" style="left:167px;top:609.0px;height:16px;line-height:16px;font-size:12px;letter-spacing:-0.156px;">Show FM Alarms</span>
<span class="t" style="left:167px;top:631.0px;height:16px;line-height:16px;font-size:12px;letter-spacing:-0.289px;">Related Work Orders</span>
<span class="t" style="left:167px;top:653.0px;height:16px;line-height:16px;font-size:12px;letter-spacing:-0.151px;">Show cost</span>
<div style="left:377px;top:282px;width:219px;height:248px;background:#fafafa;border:1px solid #5f5f5f;"></div>
<div style="left:379px;top:284px;width:24px;height:244px;background:#e7ecee;"></div>
<div style="left:403px;top:284px;width:1px;height:244px;background:#c9cccf;"></div>
<div style="left:404px;top:284px;width:1px;height:244px;background:#ffffff;"></div>
<div style="left:411px;top:307px;width:184px;height:1px;background:#d0d0d0;"></div>
<div style="left:411px;top:308px;width:184px;height:1px;background:#ffffff;"></div>
<div style="left:411px;top:394px;width:184px;height:1px;background:#d0d0d0;"></div>
<div style="left:411px;top:395px;width:184px;height:1px;background:#ffffff;"></div>
<div style="left:411px;top:481px;width:184px;height:1px;background:#d0d0d0;"></div>
<div style="left:411px;top:482px;width:184px;height:1px;background:#ffffff;"></div>
<div style="left:411px;top:505px;width:184px;height:1px;background:#d0d0d0;"></div>
<div style="left:411px;top:506px;width:184px;height:1px;background:#ffffff;"></div>
<div style="left:380px;top:372.5px;width:213px;height:19.5px;border:1px solid #e3c98f;border-radius:3px;background:linear-gradient(#fffbe8 0%,#fdedb0 46%,#fbc628 52%,#fcd24c 80%,#fde486 100%);"></div>
<span class="t" style="left:411px;top:288.0px;height:16px;line-height:16px;font-size:12px;letter-spacing:0.077px;">Traffic Configuration</span>
<span class="t" style="left:411px;top:312.0px;height:16px;line-height:16px;font-size:12px;letter-spacing:-0.266px;">Show Route For</span>
<svg style="left:579px;top:315px" width="8" height="10" viewBox="0 0 8 10"><path d="M1.5 1.5 L5.2 5 L1.5 8.5" fill="none" stroke="#4a4a4a" stroke-width="1.1"/></svg>
<span class="t" style="left:411px;top:333.0px;height:16px;line-height:16px;font-size:12px;letter-spacing:-0.170px;">Show Route Details for</span>
<svg style="left:579px;top:336px" width="8" height="10" viewBox="0 0 8 10"><path d="M1.5 1.5 L5.2 5 L1.5 8.5" fill="none" stroke="#4a4a4a" stroke-width="1.1"/></svg>
<span class="t" style="left:411px;top:354.0px;height:16px;line-height:16px;font-size:12px;letter-spacing:-0.004px;">Show Route Additional Info</span>
<svg style="left:579px;top:357px" width="8" height="10" viewBox="0 0 8 10"><path d="M1.5 1.5 L5.2 5 L1.5 8.5" fill="none" stroke="#4a4a4a" stroke-width="1.1"/></svg>
<span class="t" style="left:411px;top:375.0px;height:16px;line-height:16px;font-size:12px;letter-spacing:-0.190px;">Show Route Logical View</span>
<svg style="left:579px;top:378px" width="8" height="10" viewBox="0 0 8 10"><path d="M1.5 1.5 L5.2 5 L1.5 8.5" fill="none" stroke="#4a4a4a" stroke-width="1.1"/></svg>
<span class="t" style="left:411px;top:399.0px;height:16px;line-height:16px;font-size:12px;letter-spacing:-0.080px;">Add Route</span>
<svg style="left:579px;top:402px" width="8" height="10" viewBox="0 0 8 10"><path d="M1.5 1.5 L5.2 5 L1.5 8.5" fill="none" stroke="#4a4a4a" stroke-width="1.1"/></svg>
<span class="t" style="left:411px;top:420.0px;height:16px;line-height:16px;font-size:12px;letter-spacing:-0.205px;">Edit Route</span>
<svg style="left:579px;top:423px" width="8" height="10" viewBox="0 0 8 10"><path d="M1.5 1.5 L5.2 5 L1.5 8.5" fill="none" stroke="#4a4a4a" stroke-width="1.1"/></svg>
<span class="t" style="left:411px;top:441.0px;height:16px;line-height:16px;font-size:12px;letter-spacing:-0.106px;">Protect Route</span>
<svg style="left:579px;top:444px" width="8" height="10" viewBox="0 0 8 10"><path d="M1.5 1.5 L5.2 5 L1.5 8.5" fill="none" stroke="#4a4a4a" stroke-width="1.1"/></svg>
<span class="t" style="left:411px;top:461.5px;height:16px;line-height:16px;font-size:12px;letter-spacing:-0.122px;">Edit Tributary</span>
<svg style="left:579px;top:464.5px" width="8" height="10" viewBox="0 0 8 10"><path d="M1.5 1.5 L5.2 5 L1.5 8.5" fill="none" stroke="#4a4a4a" stroke-width="1.1"/></svg>
<span class="t" style="left:411px;top:485.5px;height:16px;line-height:16px;font-size:12px;letter-spacing:-0.254px;">Delete Route</span>
<svg style="left:579px;top:488.5px" width="8" height="10" viewBox="0 0 8 10"><path d="M1.5 1.5 L5.2 5 L1.5 8.5" fill="none" stroke="#4a4a4a" stroke-width="1.1"/></svg>
<span class="t" style="left:411px;top:509.5px;height:16px;line-height:16px;font-size:12px;letter-spacing:-0.029px;">Show Commissioning Report</span>
<svg style="left:579px;top:512.5px" width="8" height="10" viewBox="0 0 8 10"><path d="M1.5 1.5 L5.2 5 L1.5 8.5" fill="none" stroke="#4a4a4a" stroke-width="1.1"/></svg>
<div style="left:595px;top:372px;width:267px;height:46px;background:#fafafa;border:1px solid #5f5f5f;"></div>
<div style="left:597px;top:374px;width:24px;height:42px;background:#e7ecee;"></div>
<div style="left:621px;top:374px;width:1px;height:42px;background:#c9cccf;"></div>
<div style="left:622px;top:374px;width:1px;height:42px;background:#ffffff;"></div>
<div style="left:598px;top:395.5px;width:260px;height:19.5px;border:1px solid #e3c98f;border-radius:3px;background:linear-gradient(#fffbe8 0%,#fdedb0 46%,#fbc628 52%,#fcd24c 80%,#fde486 100%);"></div>
<span class="t" style="left:629px;top:376.5px;height:16px;line-height:16px;font-size:12px;letter-spacing:-0.364px;">LBHCH15_LBHCH15-MOH-C34-SPG-03</span>
<svg style="left:845px;top:379.5px" width="8" height="10" viewBox="0 0 8 10"><path d="M1.5 1.5 L5.2 5 L1.5 8.5" fill="none" stroke="#4a4a4a" stroke-width="1.1"/></svg>
<span class="t" style="left:629px;top:397.5px;height:16px;line-height:16px;font-size:12px;letter-spacing:-0.539px;">LBHCH15_LBHCH15-TSNDR10</span>
<svg style="left:845px;top:400.5px" width="8" height="10" viewBox="0 0 8 10"><path d="M1.5 1.5 L5.2 5 L1.5 8.5" fill="none" stroke="#4a4a4a" stroke-width="1.1"/></svg>
<div style="left:861px;top:395px;width:200px;height:26px;background:#fafafa;border:1px solid #5f5f5f;"></div>
<div style="left:863px;top:397px;width:24px;height:22px;background:#e7ecee;"></div>
<div style="left:887px;top:397px;width:1px;height:22px;background:#c9cccf;"></div>
<div style="left:888px;top:397px;width:1px;height:22px;background:#ffffff;"></div>
<span class="t" style="left:895px;top:400.5px;height:16px;line-height:16px;font-size:12px;letter-spacing:-0.536px;">S1-MME_LBHCH15_LBHCH15-MOH-C34-SPG-03</span>
</body></html>
